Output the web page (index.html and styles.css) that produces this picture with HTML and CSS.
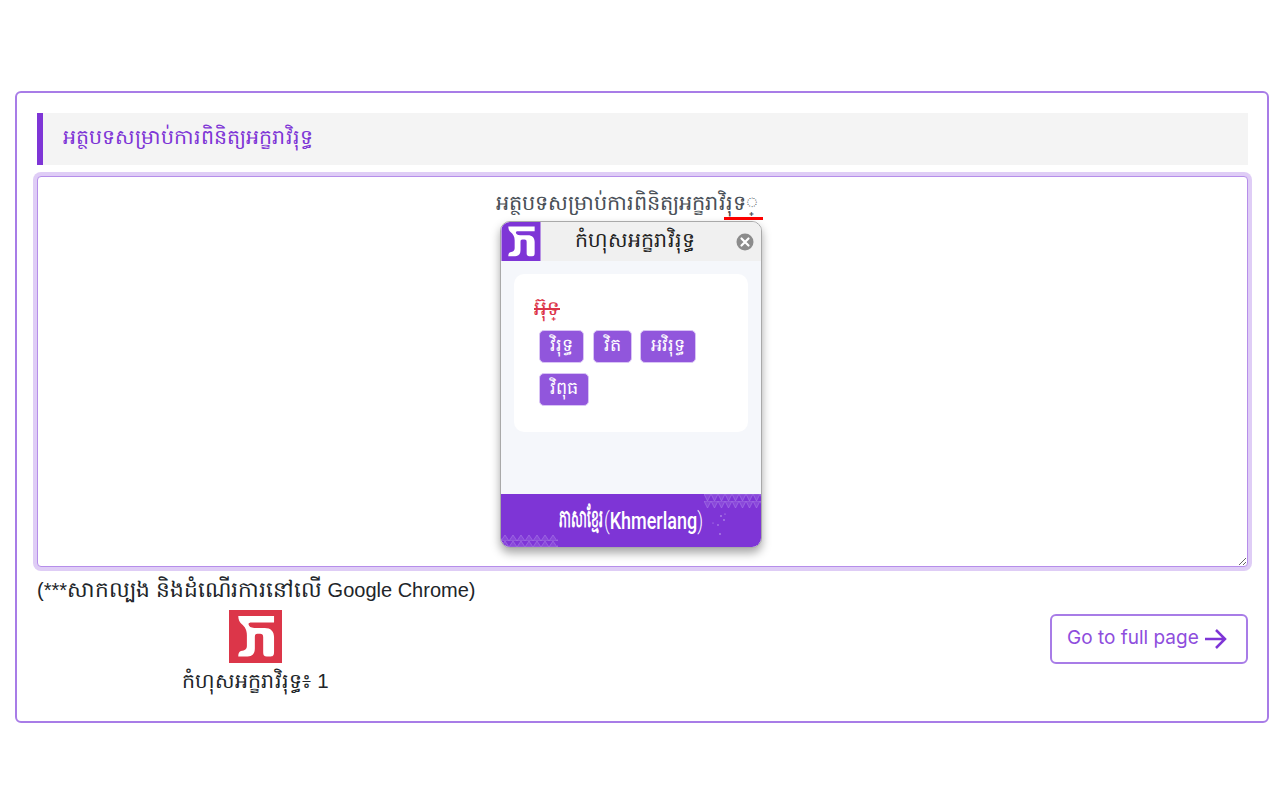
FILE: index.html
```html
<!DOCTYPE html>
<html lang="km">
<head>
    <meta charset="UTF-8">
    <meta name="viewport" content="width=device-width, initial-scale=1.0">
    <title>ពិនិត្យអក្ខរាវិរុទ្ធ</title>
    <link rel="stylesheet" href="styles.css">
</head>

<body>
    <main class="card">
        <h2 class="card-title">អត្ថបទសម្រាប់ការពិនិត្យអក្ខរាវិរុទ្ធ</h2>

        <div class="editor-wrap">
            <textarea class="editor" spellcheck="false">អត្ថបទសម្រាប់ការពិនិត្យអក្ខរាវិរុទ◌្</textarea>
            <span class="error-line"></span>

            <div class="popup">
                <div class="popup-head">
                    <svg class="popup-logo" viewBox="0 0 40 40">
                        <rect width="40" height="40" fill="#7e35d6"/>
                        <path d="M7 4.500H34V9.500H17C15.500 9.500 14.500 10 14.800 11C15 12.500 16.500 13.500 19 13.500H27C31.500 13.500 34 16 34 20.500V31.500C34 34 33.500 35 31.500 35H28.500C26.500 35 25.800 34 25.800 32V20.500C25.800 18.800 25 18 23.500 18H21.500C20 18 19.500 18.800 19.500 20.500V29C19.500 33 17.500 35 14 35H7C7 33 7.500 31.500 9 31C12 30.500 13.500 29.500 13.500 27V19C13.500 15 12 12.500 9.500 10.500C8 9.500 7 7 7 4.500Z" fill="#fff"/>
                    </svg>
                    <span class="popup-title">កំហុសអក្ខរាវិរុទ្ធ</span>
                    <svg class="popup-close" viewBox="0 0 18 18">
                        <circle cx="9" cy="9" r="8.500" fill="#8c8c8c"/>
                        <path d="M5.500 5.500l7 7M12.500 5.500l-7 7" stroke="#fff" stroke-width="2.200" stroke-linecap="round"/>
                    </svg>
                </div>
                <div class="popup-body">
                    <div class="result">
                        <div class="wrong-word">អ៊ុទ្</div>
                        <div class="suggest-list">
                            <span class="suggest">វិរុទ្ធ</span>
                            <span class="suggest">វិត</span>
                            <span class="suggest">អវិរុទ្ធ</span>
                            <span class="suggest">វិពុធ</span>
                        </div>
                    </div>
                </div>
                <div class="popup-foot">
                    <svg class="foot-pattern pattern-top" viewBox="0 0 57 16">
                        <defs>
                            <pattern id="tri-down" width="7" height="7" patternUnits="userSpaceOnUse">
                                <path d="M0 0h7l-3.500 7z" fill="#a678e6" fill-opacity=".3" stroke="#a678e6" stroke-width=".6"/>
                            </pattern>
                        </defs>
                        <rect width="57" height="14" fill="url(#tri-down)"/>
                    </svg>
                    <svg class="foot-pattern pattern-bottom" viewBox="0 0 57 16">
                        <defs>
                            <pattern id="tri-up" width="8" height="6" y="4" patternUnits="userSpaceOnUse">
                                <path d="M0 6h8l-4-6z" fill="#a678e6" fill-opacity=".3" stroke="#a678e6" stroke-width=".6"/>
                            </pattern>
                        </defs>
                        <rect y="4" width="57" height="12" fill="url(#tri-up)"/>
                    </svg>
                    <svg class="foot-dots" viewBox="0 0 20 28">
                        <g fill="#c9aef0">
                            <circle cx="12" cy="4" r=".8"/>
                            <circle cx="16" cy="2" r=".6"/>
                            <circle cx="15" cy="8" r=".8"/>
                            <circle cx="9" cy="13" r=".7"/>
                            <circle cx="4" cy="11" r=".5"/>
                            <circle cx="11" cy="22" r=".8"/>
                        </g>
                    </svg>
                    <span class="foot-km">ភាសាខ្មែរ</span>
                    <span class="foot-en"><span class="foot-paren">(</span>Khmerlang<span class="foot-paren">)</span></span>
                </div>
            </div>
        </div>

        <p class="note">(***<span class="note-km">សាកល្បង និងដំណើរការនៅលើ</span> Google Chrome)</p>

        <div class="bottom-row">
            <div class="counter">
                <svg class="counter-logo" viewBox="0 0 40 40">
                    <rect width="40" height="40" fill="#dc3649"/>
                    <path d="M7 4.500H34V9.500H17C15.500 9.500 14.500 10 14.800 11C15 12.500 16.500 13.500 19 13.500H27C31.500 13.500 34 16 34 20.500V31.500C34 34 33.500 35 31.500 35H28.500C26.500 35 25.800 34 25.800 32V20.500C25.800 18.800 25 18 23.500 18H21.500C20 18 19.500 18.800 19.500 20.500V29C19.500 33 17.500 35 14 35H7C7 33 7.500 31.500 9 31C12 30.500 13.500 29.500 13.500 27V19C13.500 15 12 12.500 9.500 10.500C8 9.500 7 7 7 4.500Z" fill="#fff"/>
                </svg>
                <div class="counter-text">កំហុសអក្ខរាវិរុទ្ធ៖ 1</div>
            </div>
            <a class="full-btn" href="#">
                Go to full page
                <svg class="full-arrow" viewBox="0 0 24 24">
                    <path d="M2 12h20M13 3l9 9-9 9" fill="none" stroke="#7e35d6" stroke-width="2.500"/>
                </svg>
            </a>
        </div>
    </main>
</body>

</html>
```

FILE: styles.css
```css
* {
    padding: 0;
    margin: 0;
    box-sizing: border-box;
}
body {
    padding: 91px 11px 0 15px;
    background-color: #fff;
    color: #212529;
    font-family: "Liberation Sans", "Noto Sans", sans-serif;
}
.card {
    height: 632px;
    padding: 20px 19px 0 20px;
    border: 2px solid #a87ce7;
    border-radius: 6px;
}
.card-title {
    height: 52px;
    padding-left: 20px;
    border-left: 6px solid #7e35d6;
    background-color: #f4f4f4;
    color: #7e35d6;
    font-size: 20.500px;
    font-weight: 400;
    line-height: 48px;
}
.editor-wrap {
    position: relative;
    margin-top: 11px;
}
.editor {
    display: block;
    width: 100%;
    height: 391px;
    padding: 11px 44px 6px 12px;
    border: 1px solid #b68eea;
    border-radius: 4px;
    box-shadow: 0 0 0 4px #dfcdf6;
    outline: none;
    color: #495057;
    font-family: inherit;
    font-size: 20.800px;
    line-height: 30px;
    text-align: center;
}
.error-line {
    position: absolute;
    top: 41px;
    left: 687px;
    width: 39px;
    height: 3px;
    background-color: #f00;
}
.popup {
    position: absolute;
    top: 45px;
    left: 463px;
    display: flex;
    flex-direction: column;
    width: 262px;
    height: 327px;
    overflow: hidden;
    border: 1px solid #a9a9a9;
    border-radius: 10px;
    background-color: #f5f7fb;
    box-shadow: 0 5px 10px rgba(0, 0, 0, .35);
}
.popup-head {
    display: flex;
    flex-shrink: 0;
    align-items: center;
    height: 39px;
    background-color: #f0f0f0;
}
.popup-logo {
    width: 40px;
    height: 39px;
}
.popup-title {
    flex: 1;
    padding-right: 7px;
    color: #222;
    font-size: 20.500px;
    text-align: center;
}
.popup-close {
    width: 18px;
    height: 18px;
    margin-right: 7px;
}
.popup-body {
    flex: 1;
    padding: 13px;
}
.result {
    height: 158px;
    padding: 19px 20px;
    border-radius: 10px;
    background-color: #fff;
}
.wrong-word {
    color: #dc3649;
    font-size: 20px;
    line-height: 30px;
    text-decoration: line-through;
}
.suggest-list {
    display: flex;
    flex-wrap: wrap;
    gap: 10px 8.500px;
    padding: 7px 5px 0;
}
.suggest {
    height: 33px;
    padding: 0 10px;
    border: 1px solid #d9c4f5;
    border-radius: 5px;
    background-color: #9156dc;
    color: #fff;
    font-size: 17.600px;
    line-height: 28px;
}
.popup-foot {
    position: relative;
    display: flex;
    flex-shrink: 0;
    justify-content: center;
    align-items: center;
    height: 53px;
    padding-right: 2px;
    background-color: #7e35d6;
    color: #fff;
    white-space: nowrap;
}
.foot-km {
    display: inline-block;
    width: 47px;
    padding-left: 4px;
    font-size: 25px;
    font-weight: 700;
    transform: scaleX(.5);
    transform-origin: left center;
}
.foot-en {
    display: inline-block;
    font-family: Roboto, sans-serif;
    font-size: 18px;
    font-weight: 500;
    transform: scaleY(1.35);
}
.foot-paren {
    font-weight: 300;
}
.foot-pattern {
    position: absolute;
    width: 57px;
    height: 16px;
}
.foot-dots {
    position: absolute;
    top: 18px;
    right: 32px;
    width: 20px;
    height: 28px;
}
.pattern-top {
    top: 0;
    right: 0;
}
.pattern-bottom {
    bottom: 0;
    left: 0;
}
.note {
    margin-top: 8px;
    margin-bottom: 5px;
    font-size: 20px;
    line-height: 30px;
}
.note-km {
    font-size: 21.700px;
}
.bottom-row {
    display: flex;
    justify-content: space-between;
    align-items: flex-start;
}
.counter {
    width: 437px;
    text-align: center;
}
.counter-logo {
    display: block;
    width: 53px;
    height: 53px;
    margin: 0 auto;
}
.counter-text {
    margin-top: 3px;
    font-size: 20.500px;
    line-height: 30px;
}
.full-btn {
    display: flex;
    align-items: center;
    gap: 4px;
    width: 198px;
    height: 50px;
    margin-top: 4px;
    padding: 0 0 4px 15px;
    border: 2px solid #a87ce7;
    border-radius: 6px;
    color: #8e4ddd;
    font-family: Inter, sans-serif;
    font-size: 19px;
    text-decoration: none;
}
.full-arrow {
    width: 24px;
    height: 24px;
    margin-top: 4px;
}
```
